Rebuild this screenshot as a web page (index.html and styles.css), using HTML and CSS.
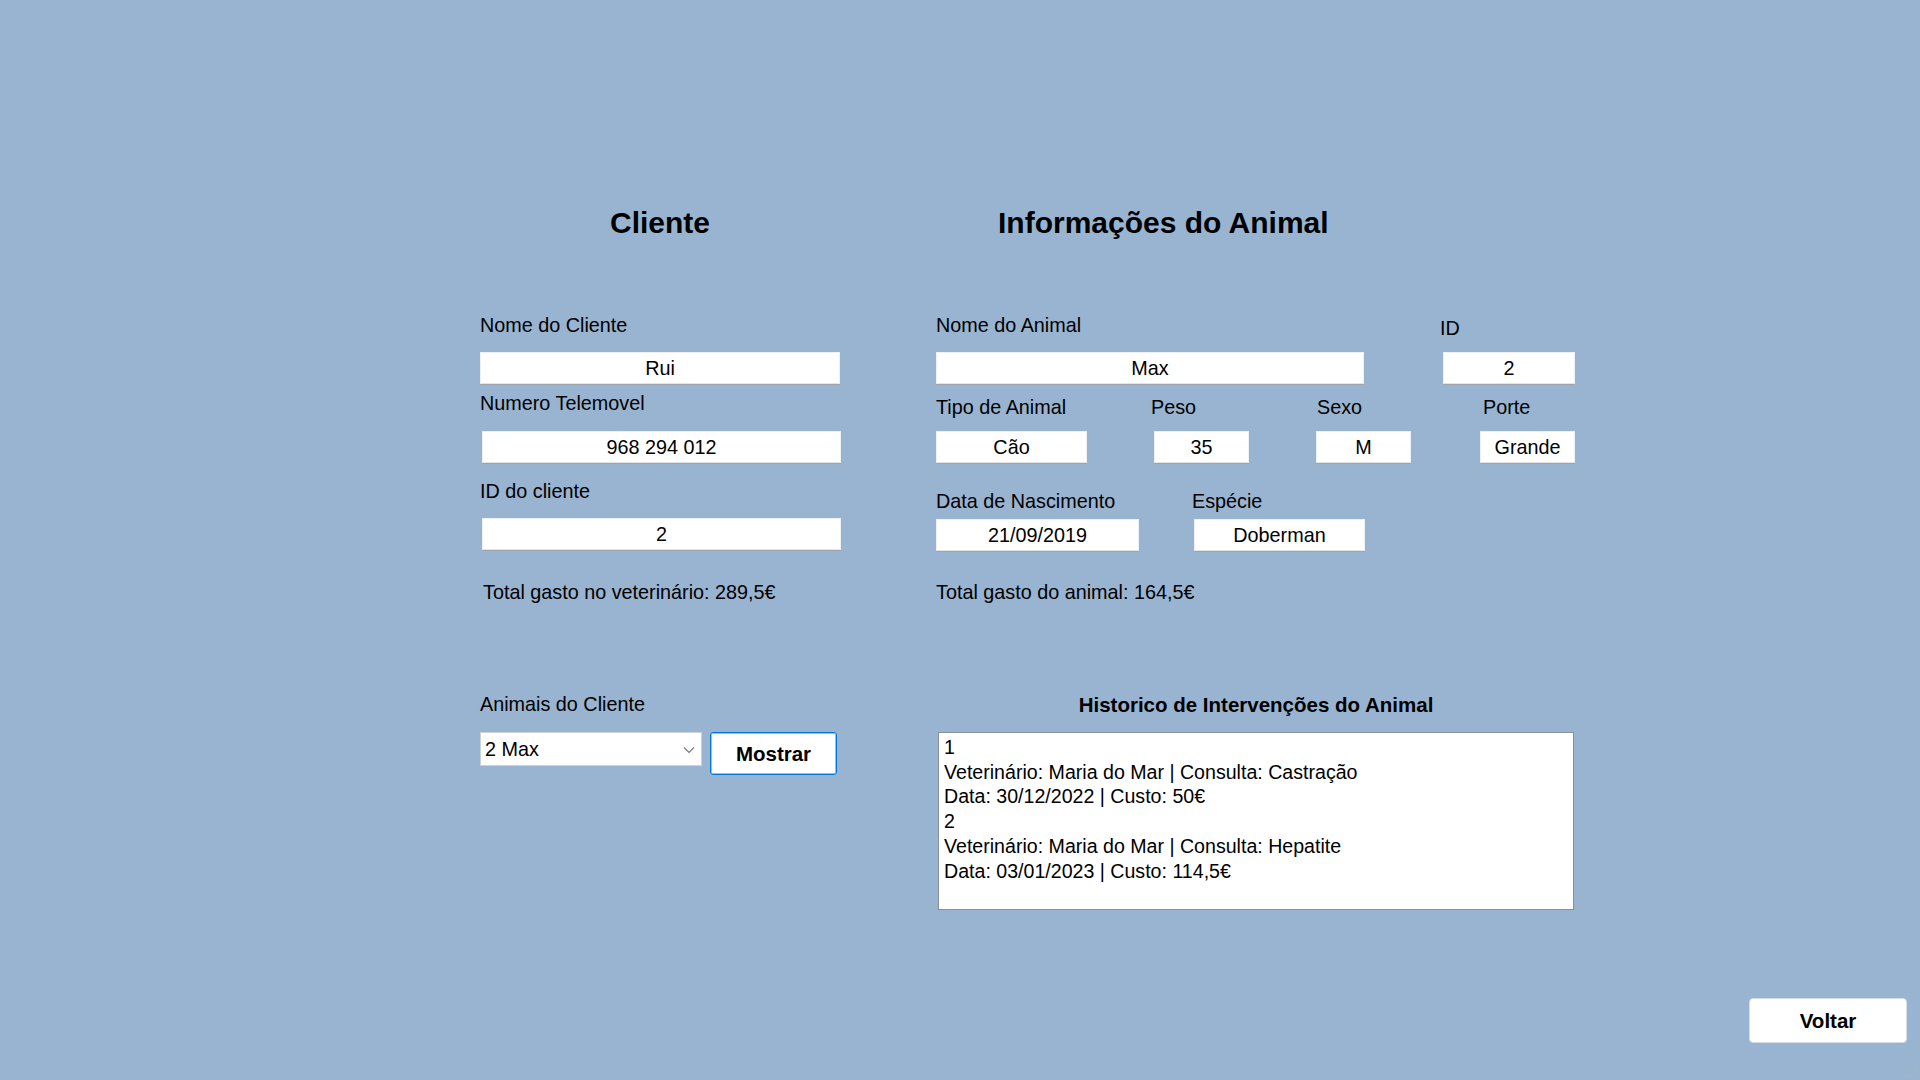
FILE: index.html
```
<!DOCTYPE html>
<html lang="pt">
<head>
<meta charset="utf-8">
<title>Cliente</title>
<link rel="stylesheet" href="styles.css">
</head>
<body>
<div class="window">
  <div class="content">
    <section class="client">
      <h1 class="title">Cliente</h1>
      <div class="label lbl-first">Nome do Cliente</div>
      <div class="box box-name">Rui</div>
      <div class="label lbl-phone">Numero Telemovel</div>
      <div class="box box-phone">968 294 012</div>
      <div class="label lbl-id">ID do cliente</div>
      <div class="box box-id">2</div>
      <div class="label total">Total gasto no veterinário: 289,5€</div>
      <div class="label lbl-animals">Animais do Cliente</div>
      <div class="pick-row">
        <div class="select">
          <span>2 Max</span>
          <svg class="chev" width="12" height="8" viewBox="0 0 12 8"><path d="M1 1.5 L6 6.5 L11 1.5" fill="none" stroke="#7a7a7a" stroke-width="1.2"/></svg>
        </div>
        <button class="btn btn-show">Mostrar</button>
      </div>
    </section>

    <section class="animal">
      <h1 class="title title-animal">Informações do Animal</h1>
      <div class="row lbl-first r-lbl1">
        <div class="label w-name">Nome do Animal</div>
        <div class="label lbl-idA">ID</div>
      </div>
      <div class="row r-boxes1">
        <div class="box b-max">Max</div>
        <div class="box b-id">2</div>
      </div>
      <div class="row r-lbl2">
        <div class="label c1">Tipo de Animal</div>
        <div class="label c2">Peso</div>
        <div class="label c3">Sexo</div>
        <div class="label">Porte</div>
      </div>
      <div class="row r-boxes2">
        <div class="box b-tipo">Cão</div>
        <div class="box b-small">35</div>
        <div class="box b-small">M</div>
        <div class="box b-small b-porte">Grande</div>
      </div>
      <div class="row r-lbl3">
        <div class="label c-data">Data de Nascimento</div>
        <div class="label">Espécie</div>
      </div>
      <div class="row r-boxes3">
        <div class="box b-date">21/09/2019</div>
        <div class="box b-esp">Doberman</div>
      </div>
      <div class="label total">Total gasto do animal: 164,5€</div>
      <h2 class="hist-title">Historico de Intervenções do Animal</h2>
      <div class="history">
        <div>1</div>
        <div>Veterinário: Maria do Mar | Consulta: Castração</div>
        <div>Data: 30/12/2022 | Custo: 50€</div>
        <div>2</div>
        <div>Veterinário: Maria do Mar | Consulta: Hepatite</div>
        <div>Data: 03/01/2023 | Custo: 114,5€</div>
      </div>
    </section>
  </div>

  <div class="footer">
    <button class="btn btn-back">Voltar</button>
  </div>

  <svg class="grip" width="14" height="14" viewBox="0 0 14 14">
    <rect x="10" y="1" width="2" height="2" fill="#a7b3c2"/>
    <rect x="5" y="6" width="2" height="2" fill="#a7b3c2"/>
    <rect x="10" y="6" width="2" height="2" fill="#a7b3c2"/>
    <rect x="0" y="11" width="2" height="2" fill="#a7b3c2"/>
    <rect x="5" y="11" width="2" height="2" fill="#a7b3c2"/>
    <rect x="10" y="11" width="2" height="2" fill="#a7b3c2"/>
  </svg>
</div>
</body>
</html>
```

FILE: styles.css
```
html, body {
  margin: 0;
  padding: 0;
}
body {
  background: #99b4d1;
  font-family: "Liberation Sans", Arial, sans-serif;
  color: #000;
  overflow: hidden;
}
.window {
  position: relative;
  width: 1920px;
  height: 1080px;
  display: flex;
  flex-direction: column;
  box-sizing: border-box;
}
.content {
  display: flex;
  padding-top: 205px;
  padding-left: 480px;
}
.client {
  width: 362px;
  display: flex;
  flex-direction: column;
}
.animal {
  margin-left: 94px;
  width: 640px;
  display: flex;
  flex-direction: column;
}
.title {
  margin: 0;
  font-size: 30px;
  line-height: 36px;
  height: 36px;
  font-weight: bold;
  text-align: center;
  width: 360px;
  white-space: nowrap;
}
.title-animal {
  text-align: left;
  padding-left: 62px;
  width: auto;
}
.label {
  font-size: 19.8px;
  line-height: 24px;
  height: 24px;
  white-space: nowrap;
}
.box {
  box-sizing: border-box;
  height: 32px;
  background: #fff;
  border: 1px solid #eef0f3;
  border-bottom: 1px solid #e4e4e4;
  box-shadow: 0 1px 0 #9ea4ab;
  font-size: 19.8px;
  line-height: 30px;
  text-align: center;
  white-space: nowrap;
}
.lbl-first { margin-top: 72px; }
.box-name { margin-top: 15px; width: 360px; }
.lbl-phone { margin-top: 7px; }
.box-phone { margin-top: 16px; margin-left: 2px; width: 359px; }
.lbl-id { margin-top: 16px; }
.box-id { margin-top: 15px; margin-left: 2px; width: 359px; }
.total { margin-top: 30px; padding-left: 3px; }
.animal .total { margin-top: 29px; padding-left: 0; }
.lbl-animals { margin-top: 88px; }

.pick-row {
  display: flex;
  align-items: flex-start;
  margin-top: 16px;
}
.select {
  box-sizing: border-box;
  width: 222px;
  height: 34px;
  background: #fff;
  border: 1px solid #cdd1d6;
  display: flex;
  align-items: center;
  justify-content: space-between;
  padding: 0 6px 0 4px;
  font-size: 19.8px;
  white-space: nowrap;
}
.chev { margin-top: 1px; }
.btn {
  font-family: "Liberation Sans", Arial, sans-serif;
  font-weight: bold;
  font-size: 20.5px;
  color: #000;
  background: #fff;
  box-sizing: border-box;
  padding: 0;
  cursor: default;
}
.btn-show {
  margin-left: 8px;
  width: 127px;
  height: 43px;
  border: 1px solid #0078d7;
  box-shadow: inset 0 0 0 1px #8fc2ec;
  border-radius: 3px;
}

.row {
  display: flex;
  align-items: flex-start;
}
.r-lbl1 { height: 24px; }
.w-name { width: 504px; }
.lbl-idA { margin-top: 3px; }
.r-boxes1 { margin-top: 15px; }
.b-max { width: 428px; }
.b-id { margin-left: 79px; width: 132px; }
.r-lbl2 { margin-top: 11px; }
.c1 { width: 215px; }
.c2 { width: 166px; }
.c3 { width: 166px; }
.r-boxes2 { margin-top: 12px; }
.b-tipo { width: 151px; }
.b-small { width: 95px; margin-left: 67px; }
.b-porte { margin-left: 69px; }
.r-lbl3 { margin-top: 26px; }
.c-data { width: 256px; }
.r-boxes3 { margin-top: 6px; }
.b-date { width: 203px; }
.b-esp { margin-left: 55px; width: 171px; }

.hist-title {
  margin: 89px 0 0 2px;
  width: 636px;
  font-size: 20.5px;
  line-height: 24px;
  height: 24px;
  font-weight: bold;
  text-align: center;
  white-space: nowrap;
}
.history {
  box-sizing: border-box;
  margin: 15px 0 0 2px;
  width: 636px;
  height: 178px;
  background: #fff;
  border: 1px solid #8a9099;
  padding: 2px 0 0 5px;
  font-size: 19.6px;
  line-height: 24.7px;
  white-space: nowrap;
}

.footer {
  margin-top: auto;
  display: flex;
  justify-content: flex-end;
  padding: 0 13px 37px 0;
}
.btn-back {
  width: 158px;
  height: 45px;
  border: 1px solid #d6dbe1;
  border-radius: 4px;
}
.grip {
  position: absolute;
  right: 2px;
  bottom: 2px;
}
```
